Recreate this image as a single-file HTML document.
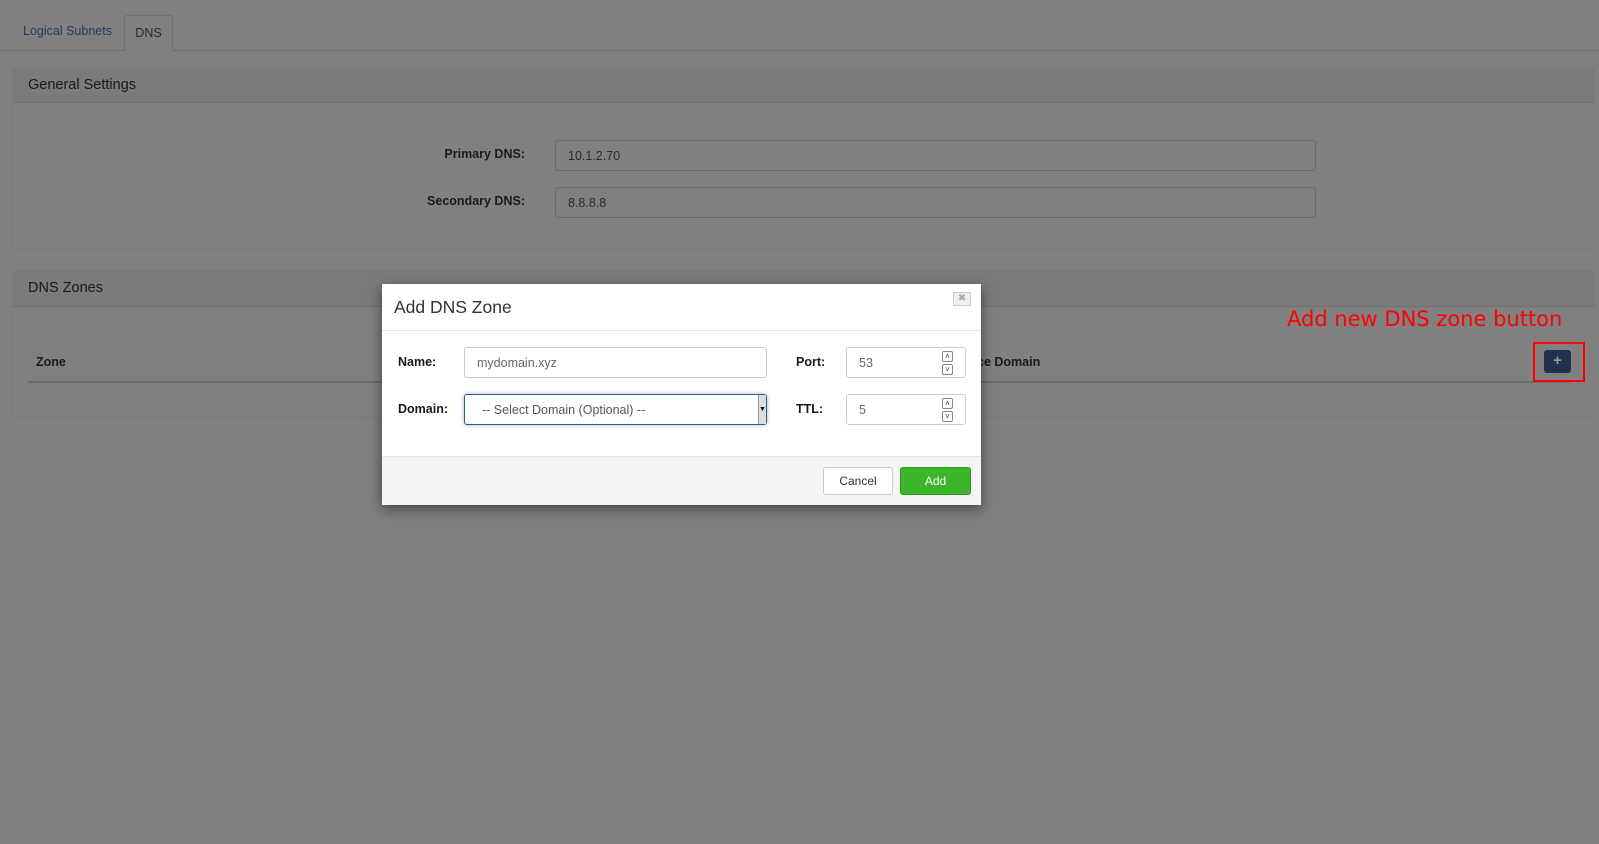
<!DOCTYPE html>
<html><head><meta charset="utf-8"><style>
*{box-sizing:border-box;margin:0;padding:0}
body{width:1599px;height:844px;background:#808080;font-family:"Liberation Sans",sans-serif;position:relative;overflow:hidden;color:#1a1a1a}
.a{position:absolute}
.inp{position:absolute;border:1px solid #6a6a6a;border-radius:3px;background:#808080;color:#2a2a2a;font-size:12.5px;padding-left:12px;display:flex;align-items:center}
.lbl{position:absolute;font-size:12.5px;font-weight:bold;color:#1a1a1a}
.m .inp{border-color:#ccc;background:#fff;color:#666}
.spin{position:absolute;right:12px;width:11px;height:24px;top:3px}
.spin div{height:11px;border:1px solid #888;border-radius:2px;margin-bottom:2px;font-size:8px;line-height:9px;text-align:center;color:#333}
</style></head><body>
<div class="a" style="left:0;top:50px;width:1599px;border-top:1px solid #707070"></div>
<div class="a" style="left:23px;top:24px;font-size:12.5px;color:#233a5a">Logical Subnets</div>
<div class="a" style="left:124px;top:15px;width:49px;height:36px;border:1px solid #707070;border-bottom:none;border-radius:3px 3px 0 0;background:#808080;font-size:12.5px;color:#2a2a2a;text-align:center;line-height:34px">DNS</div>

<div class="a" style="left:12px;top:67px;width:1583px;height:183px;border:1px solid #7a7a7a;background:#808080"></div>
<div class="a" style="left:12px;top:67px;width:1583px;height:36px;background:#7b7b7b;border-bottom:1px solid #707070"></div>
<div class="a" style="left:28px;top:77px;font-size:14.5px;color:#1a1a1a">General Settings</div>
<div class="lbl" style="right:1074px;top:147px">Primary DNS:</div>
<div class="inp" style="left:555px;top:140px;width:761px;height:31px">10.1.2.70</div>
<div class="lbl" style="right:1074px;top:194px">Secondary DNS:</div>
<div class="inp" style="left:555px;top:187px;width:761px;height:31px">8.8.8.8</div>

<div class="a" style="left:12px;top:270px;width:1583px;height:148px;border:1px solid #7a7a7a;background:#808080"></div>
<div class="a" style="left:12px;top:270px;width:1583px;height:37px;background:#7b7b7b;border-bottom:1px solid #707070"></div>
<div class="a" style="left:28px;top:280px;font-size:14.5px">DNS Zones</div>
<div class="lbl" style="left:36px;top:355px">Zone</div>
<div class="lbl" style="left:977px;top:355px">ce Domain</div>
<div class="a" style="left:28px;top:381px;width:1542px;border-top:2px solid #6a6a6a"></div>
<div class="a" style="left:1544px;top:350px;width:27px;height:23px;background:#20324c;border-radius:3px;color:#999;font-weight:bold;font-size:15px;text-align:center;line-height:22px">+</div>
<div class="a" style="left:1533px;top:342px;width:52px;height:40px;border:2px solid #ff0000"></div>
<div class="a" style="left:1287px;top:307px;font-family:'DejaVu Sans',sans-serif;font-size:21px;color:#ff0000;letter-spacing:0">Add new DNS zone button</div>

<div class="a m" style="left:382px;top:284px;width:599px;height:221px;background:#fff;box-shadow:0 4px 12px rgba(0,0,0,.5)">
<div class="a" style="left:0;top:0;width:599px;height:47px;border-bottom:1px solid #e5e5e5"></div>
<div class="a" style="left:12px;top:13px;font-size:17.5px;color:#333">Add DNS Zone</div>
<div class="a" style="left:571px;top:8px;width:18px;height:14px;border:1px solid #ccc;background:#eee;font-size:10px;color:#aaa;text-align:center;line-height:12px">✖</div>
<div class="lbl" style="left:16px;top:71px">Name:</div>
<div class="inp" style="left:82px;top:63px;width:303px;height:31px">mydomain.xyz</div>
<div class="lbl" style="left:16px;top:118px">Domain:</div>
<div class="inp" style="left:82px;top:110px;width:303px;height:31px;border-color:#3a5a8a;box-shadow:0 0 4px rgba(60,100,160,.5);padding-left:17px;color:#555">-- Select Domain (Optional) --<div style="position:absolute;right:0;top:0;width:8px;height:29px;background:#ddd;border-left:1px solid #999;font-size:7px;line-height:29px;text-align:center;color:#000">▼</div></div>
<div class="lbl" style="left:414px;top:71px">Port:</div>
<div class="inp" style="left:464px;top:63px;width:120px;height:31px">53<div class="spin"><div>˄</div><div>˅</div></div></div>
<div class="lbl" style="left:414px;top:118px">TTL:</div>
<div class="inp" style="left:464px;top:110px;width:120px;height:31px">5<div class="spin"><div>˄</div><div>˅</div></div></div>
<div class="a" style="left:0;top:172px;width:599px;height:49px;background:#f5f5f5;border-top:1px solid #e5e5e5"></div>
<div class="a" style="left:441px;top:183px;width:70px;height:28px;background:#fff;border:1px solid #ccc;border-radius:3px;font-size:12px;color:#333;text-align:center;line-height:26px">Cancel</div>
<div class="a" style="left:518px;top:183px;width:71px;height:28px;background:#3cb52b;border:1px solid #2f9a22;border-radius:3px;font-size:12px;color:#fff;text-align:center;line-height:26px">Add</div>
</div>
</body></html>
